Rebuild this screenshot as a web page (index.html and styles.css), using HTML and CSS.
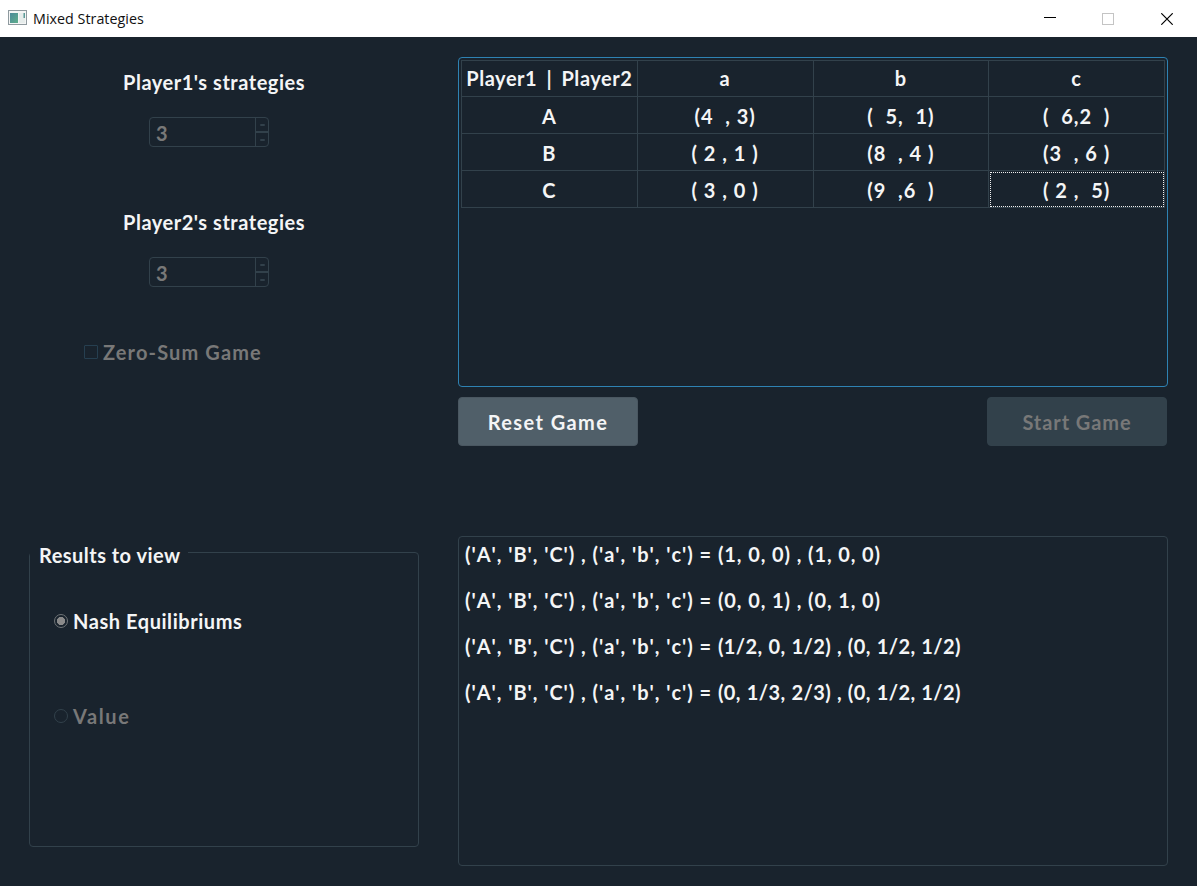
FILE: index.html
```html
<!DOCTYPE html>
<html lang="en">
<head>
<meta charset="utf-8">
<title>Mixed Strategies</title>
<link rel="stylesheet" href="styles.css">
</head>
<body>
<header class="titlebar">
  <svg class="app-icon" width="19" height="15" viewBox="0 0 19 15">
    <defs><linearGradient id="pane" x1="0" y1="0" x2="1" y2="1"><stop offset="0" stop-color="#4c8a9a"/><stop offset="1" stop-color="#5fae8c"/></linearGradient></defs>
    <rect x=".5" y=".5" width="18" height="14" fill="#f4f5f5" stroke="#8f9a9f"/>
    <rect x="2" y="3" width="8" height="10" fill="url(#pane)"/>
    <rect x="11" y="3" width="6" height="10" fill="#e6eceb"/>
    <rect x="15.5" y="3" width="1.5" height="5" fill="#5b9a98"/>
  </svg>
  <h1 class="title">Mixed Strategies</h1>
  <div class="controls">
    <svg width="12" height="13" viewBox="0 0 12 13"><path d="M0 5.5H12" stroke="#000"/></svg>
    <svg width="12" height="12" viewBox="0 0 12 12"><rect x=".5" y=".5" width="11" height="11" fill="none" stroke="#c4c4c4"/></svg>
    <svg width="12" height="12" viewBox="0 0 12 12"><path d="M.3 .3L11.7 11.7M11.7 .3L.3 11.7" stroke="#000" stroke-width="1.2"/></svg>
  </div>
</header>
<main class="window">
  <section class="settings">
    <div class="label">Player1's strategies</div>
    <div class="spin"><span class="spin-value">3</span><span class="spin-buttons"><i class="step"></i><i class="step"></i></span></div>
    <div class="label">Player2's strategies</div>
    <div class="spin"><span class="spin-value">3</span><span class="spin-buttons"><i class="step"></i><i class="step"></i></span></div>
    <div class="check"><i class="box"></i><span class="t-zero">Zero-Sum Game</span></div>
  </section>
  <section class="game">
    <div class="table-frame">
      <table class="payoffs">
        <tr><td class="t-head">Player1 | Player2</td><td>a</td><td>b</td><td>c</td></tr>
        <tr><td>A</td><td><span>(4  , 3)</span></td><td><span>(  5,  1)</span></td><td><span>(  6,2  )</span></td></tr>
        <tr><td>B</td><td><span>( 2 , 1 )</span></td><td><span>(8  , 4 )</span></td><td><span>(3  , 6 )</span></td></tr>
        <tr><td>C</td><td><span>( 3 , 0 )</span></td><td><span>(9  ,6  )</span></td><td class="focused"><span>( 2 ,  5)</span></td></tr>
      </table>
    </div>
    <div class="actions">
      <button class="btn t-reset">Reset Game</button>
      <button class="btn btn-off t-start" disabled>Start Game</button>
    </div>
  </section>
  <fieldset class="results">
    <legend class="t-legend">Results to view</legend>
    <div class="radio"><i class="dot dot-on"></i><span class="t-nash">Nash Equilibriums</span></div>
    <div class="radio radio-off"><i class="dot"></i><span class="t-value">Value</span></div>
  </fieldset>
  <section class="output">
    <p><span class="names">('A', 'B', 'C') , ('a', 'b', 'c') = </span>(1, 0, 0) , (1, 0, 0)</p>
    <p><span class="names">('A', 'B', 'C') , ('a', 'b', 'c') = </span>(0, 0, 1) , (0, 1, 0)</p>
    <p><span class="names">('A', 'B', 'C') , ('a', 'b', 'c') = </span><span class="mixed">(1/2, 0, 1/2) , (0, 1/2, 1/2)</span></p>
    <p><span class="names">('A', 'B', 'C') , ('a', 'b', 'c') = </span><span class="mixed">(0, 1/3, 2/3) , (0, 1/2, 1/2)</span></p>
  </section>
</main>
</body>
</html>
```
FILE: styles.css
```css
* { box-sizing: border-box; }
body { margin: 0; height: 886px; overflow: hidden; background: #19232d; color: #f4f5f6;
  font: 700 20px/24px "Century Gothic", Lato, sans-serif; display: flex; flex-direction: column; }
.titlebar { height: 37px; flex: none; background: #fff; color: #111; display: flex; align-items: center; padding: 0 24px 0 8px; }
.app-icon { margin-bottom: 2px; }
.title { margin: 0 0 0 6px; font: 400 14.3px/20px "Segoe UI", "Open Sans", sans-serif; letter-spacing: .02px; }
.controls { margin-left: auto; display: flex; align-items: center; gap: 46px; height: 35px; }
.controls svg:nth-child(2) { margin-right: 1px; }
.window { flex: 1; display: grid; grid-template-columns: 390px 710px; grid-template-rows: 409px 330px; column-gap: 39px; row-gap: 70px; padding: 20px 29px; border-bottom: 2px solid #121c25; }

.settings { display: flex; flex-direction: column; align-items: flex-start; padding-top: 13px; }
.label { margin-left: 94px; white-space: nowrap; letter-spacing: .53px; }
.spin { width: 120px; height: 30px; margin: 23px 0 63px 120px; border: 1px solid #32414b; border-radius: 4px; display: flex; color: #787878; }
.spin-value { flex: 1; padding: 3px 0 0 6px; }
.spin-buttons { width: 13px; border-left: 1px solid #32414b; display: flex; flex-direction: column; }
.step { flex: 1; display: flex; align-items: center; justify-content: center; }
.step + .step { border-top: 2px solid #32414b; }
.step::after { content: ""; width: 5px; height: 2px; background: #32414b; border-radius: 1px; }
.check { display: flex; align-items: center; color: #787878; margin: -10px 0 0 55px; gap: 5px; white-space: nowrap; }
.t-zero { letter-spacing: 1.13px; }
.box { width: 14px; height: 14px; border: 1px solid #263f50; border-radius: 1px; }

.table-frame { height: 330px; border: 1px solid #2e82b3; border-radius: 4px; padding: 2px; }
.payoffs { border-collapse: collapse; table-layout: fixed; width: 704px; }
.payoffs td { height: 37px; padding: 1px 0 0; border: 1px solid #32414b; text-align: center; vertical-align: middle; white-space: pre; letter-spacing: 1px; }
.payoffs tr:first-child td { height: 36px; padding-top: 0; padding-bottom: 1px; }
.payoffs .t-head { letter-spacing: .55px; word-spacing: 3.8px; }
.payoffs .focused { outline: 1px dotted #f0f0f0; outline-offset: -2px; }
.actions { display: flex; justify-content: space-between; padding-right: 1px; margin-top: 10px; }
.btn { width: 180px; height: 49px; padding: 1px 0 0; border: 1px solid #4a5761; border-radius: 4px; background: #505f69; color: #f4f5f6; font: inherit; }
.btn-off { background: #32414b; border-color: #32414b; color: #787878; }
.t-reset { letter-spacing: 1.4px; }
.t-start { letter-spacing: .92px; }

.results { margin: 1px 0 0; padding: 0 0 0 24px; min-width: 0; height: 310px; border: 1px solid #32414b; border-radius: 4px; }
.results legend { margin-left: -24px; padding: 6px 7px 0 9px; letter-spacing: .47px; }
.radio { display: flex; align-items: center; gap: 5px; margin-top: 42px; white-space: nowrap; }
.radio-off { color: #787878; margin-top: 71px; }
.t-nash { letter-spacing: .56px; }
.t-value { letter-spacing: 1.6px; }
.dot { width: 14px; height: 14px; border: 1px solid #32414b; border-radius: 50%; }
.dot-on { border-color: #6e7376; background: radial-gradient(circle, #8a8a8a 3.8px, transparent 4.4px); }

.output { border: 1px solid #32414b; border-radius: 4px; padding: 5px 6px; }
.output p { margin: 0 0 22px; white-space: nowrap; letter-spacing: .9px; }
.output .names { font-kerning: none; letter-spacing: .97px; }
.output .mixed { letter-spacing: .4px; word-spacing: .6px; }
```
